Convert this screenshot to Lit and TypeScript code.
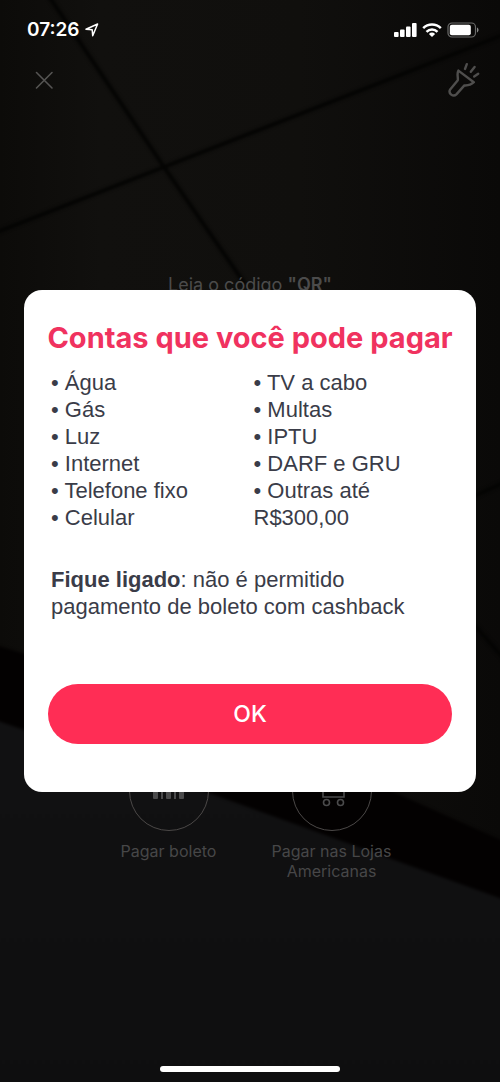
import { LitElement, html, css, svg } from "lit";
import { customElement, property } from "lit/decorators.js";

@customElement("status-bar")
class StatusBar extends LitElement {
  static styles = css`
    :host {
      display: flex;
      justify-content: space-between;
      align-items: center;
      height: 60px;
      padding: 0 21px 0 27px;
      color: #fff;
    }
    .side {
      display: flex;
      align-items: center;
      gap: 5px;
    }
    .time {
      font-size: 19px;
      font-weight: 600;
      line-height: 24px;
    }
    svg {
      display: block;
    }
  `;

  render() {
    return html`
      <div class="side">
        <span class="time">07:26</span>
        <svg width="14" height="14" viewBox="0 0 14 14" aria-hidden="true">
          <path d="M1 6.2 12.6 1 7.7 12.8 7.2 6.8Z" fill="none" stroke="#fff" stroke-width="1.5" stroke-linejoin="round" />
        </svg>
      </div>
      <div class="side">
        <svg width="23" height="16" viewBox="0 0 23 16" fill="#fff" aria-hidden="true">
          <rect x="0" y="10" width="4.6" height="5" rx="1" />
          <rect x="6" y="7.4" width="4.6" height="7.6" rx="1" />
          <rect x="12" y="4.4" width="4.6" height="10.6" rx="1" />
          <rect x="18" y="1" width="4.6" height="14" rx="1" />
        </svg>
        <svg width="20" height="16" viewBox="0 0 20 16" fill="none" stroke="#fff" stroke-width="2.5" aria-hidden="true">
          <path d="M1.2 6.2a12.6 12.6 0 0 1 17.6 0" />
          <path d="M4.5 9.8a7.9 7.9 0 0 1 11 0" />
          <path d="M10 15 6.9 12a4.5 4.5 0 0 1 6.2 0Z" fill="#fff" stroke="none" />
        </svg>
        <svg width="32" height="16" viewBox="0 0 32 16" aria-hidden="true">
          <rect x="1" y="1" width="27.5" height="14" rx="4" fill="none" stroke="#6b6b6a" stroke-width="1.2" />
          <rect x="2.8" y="2.8" width="21" height="10.4" rx="2" fill="#fff" />
          <path d="M30 5.6c2 .8 2 4 0 4.8Z" fill="#8a8a89" />
        </svg>
      </div>
    `;
  }
}

@customElement("pay-action")
class PayAction extends LitElement {
  @property() label = "";
  @property() icon = "";

  static styles = css`
    :host {
      display: block;
    }
    .action {
      display: flex;
      flex-direction: column;
      align-items: center;
      gap: 10px;
      width: 100%;
      padding: 0 16px;
      border: 0;
      background: none;
      color: #474748;
      font: inherit;
      font-size: 16px;
      line-height: 20px;
    }
    .ring {
      display: grid;
      place-items: center;
      box-sizing: border-box;
      width: 80px;
      height: 80px;
      border: 1px solid #4b4847;
      border-radius: 50%;
    }
  `;

  private glyph() {
    return this.icon === "barcode"
      ? svg`<g fill="#4b4b4c">
          <rect x="4" y="4" width="5" height="24" rx="1"/>
          <rect x="12" y="4" width="2" height="24"/>
          <rect x="17" y="4" width="5" height="24" rx="1"/>
          <rect x="25" y="4" width="2" height="24"/>
          <rect x="30" y="4" width="5" height="24" rx="1"/>
        </g>`
      : svg`<g fill="none" stroke="#4b4b4c" stroke-width="1.6">
          <path d="M4 4h5l3 14M10 8h24l-3 11H11v7h21v-5"/>
          <circle cx="14.5" cy="31.5" r="3"/>
          <circle cx="28.5" cy="31.5" r="3"/>
        </g>`;
  }

  render() {
    return html`
      <button class="action" type="button">
        <span class="ring">
          <svg width="40" height="40" viewBox="0 0 40 40" aria-hidden="true">${this.glyph()}</svg>
        </span>
        <span>${this.label}</span>
      </button>
    `;
  }
}

@customElement("app-root")
class AppRoot extends LitElement {
  static styles = css`
    :host {
      display: block;
      font-family: Inter, "Liberation Sans", sans-serif;
    }
    .screen {
      position: relative;
      display: flex;
      flex-direction: column;
      min-height: 100vh;
      overflow: hidden;
      background: #0f0e0d;
    }
    .photo,
    .overlay {
      position: absolute;
      inset: 0;
      width: 100%;
      height: 100%;
    }
    .front {
      position: relative;
      display: flex;
      flex: 1;
      flex-direction: column;
    }
    .tools {
      display: flex;
      justify-content: space-between;
      align-items: center;
      height: 40px;
      padding: 0 18px 0 32px;
    }
    .tool {
      display: block;
      padding: 0;
      border: 0;
      background: none;
    }
    .tool svg {
      display: block;
    }
    .prompt {
      flex: 1;
      margin: 0;
      padding-top: 173px;
      color: #4b4b4b;
      font-size: 18px;
      line-height: 24px;
      text-align: center;
    }
    .prompt strong {
      font-weight: 600;
    }
    .actions {
      display: grid;
      grid-template-columns: repeat(2, 163px);
      justify-content: center;
      padding-bottom: 185px;
    }
    .home {
      align-self: center;
      width: 36%;
      height: 6px;
      margin-bottom: 10px;
      border-radius: 3px;
      background: #fff;
    }
    .overlay {
      display: flex;
      align-items: center;
      box-sizing: border-box;
      padding: 0 24px;
    }
    .card {
      flex: 1;
      min-width: 0;
      padding: 30px 24px 48px;
      border-radius: 18px;
      background: #fff;
      color: #3a3c48;
      font-family: "Liberation Sans", Arial, sans-serif;
      font-size: 22px;
      line-height: 27px;
    }
    .title {
      display: flex;
      justify-content: center;
      margin: 0 0 13px;
      color: #f0325f;
      font-family: Inter, sans-serif;
      font-size: 29px;
      font-weight: 700;
      line-height: 36px;
      white-space: nowrap;
    }
    .columns {
      display: grid;
      grid-template-columns: 1fr 1fr;
      gap: 4px;
      padding-left: 3px;
    }
    .list {
      margin: 0;
      padding: 0;
      list-style: none;
    }
    .item::before {
      content: "• ";
    }
    .note {
      margin: 0;
      padding: 35px 3px 64px;
    }
    .ok {
      display: block;
      width: 100%;
      height: 60px;
      border: 0;
      border-radius: 30px;
      background: #ff2d55;
      color: #fff;
      font-family: Inter, sans-serif;
      font-size: 23px;
      font-weight: 500;
    }
  `;

  private left = ["Água", "Gás", "Luz", "Internet", "Telefone fixo", "Celular"];
  private right = ["TV a cabo", "Multas", "IPTU", "DARF e GRU", "Outras até R$300,00"];

  private list(items: string[]) {
    return html`<ul class="list">${items.map((i) => html`<li class="item">${i}</li>`)}</ul>`;
  }

  render() {
    return html`
      <div class="screen">
        <svg class="photo" viewBox="0 0 500 1082" preserveAspectRatio="none" aria-hidden="true">
          <defs>
            <linearGradient id="tile" x1="0" y1="0" x2="1" y2="0">
              <stop offset="0" stop-color="#0c0b09" />
              <stop offset=".2" stop-color="#11100e" />
              <stop offset=".6" stop-color="#100f0d" />
              <stop offset="1" stop-color="#0a0908" />
            </linearGradient>
            <linearGradient id="desk" x1="0" y1="0" x2="0" y2="1">
              <stop offset="0" stop-color="#111112" />
              <stop offset="1" stop-color="#0e0e0f" />
            </linearGradient>
            <filter id="soft" color-interpolation-filters="sRGB"><feGaussianBlur stdDeviation="1.5" /></filter>
          </defs>
          <rect width="500" height="1082" fill="url(#tile)" />
          <g filter="url(#soft)">
            <path d="M48-5 164 167 245 284M-5 233 164 167 505 34M470 498 505 482M470 620 505 660" fill="none" stroke="#040403" stroke-width="4" />
            <path d="M-5 645 210 710 505 842V905L220 800-5 725Z" fill="#030101" />
            <path d="M-5 720 220 797 505 900V1090H-5Z" fill="url(#desk)" />
          </g>
        </svg>

        <div class="front">
          <status-bar></status-bar>
          <div class="tools">
            <button class="tool" type="button" aria-label="Fechar">
              <svg width="24" height="24" viewBox="0 0 24 24" fill="none" stroke="#555453" stroke-width="1.6" stroke-linecap="round">
                <path d="M4.5 4.5 20 20M20 4.5 4.5 20" />
              </svg>
            </button>
            <button class="tool" type="button" aria-label="Lanterna">
              <svg width="36" height="36" viewBox="0 0 36 36" fill="none" stroke="#4f4e4d" stroke-width="2.4" stroke-linecap="round" stroke-linejoin="round">
                <path d="M12.4 8.6 27.8 20.2C25.4 22.6 22 23.6 18.4 23.4L10.4 32.4C7.2 35.4 1.8 31.6 4.2 27.4L11.8 18.2C12.2 14.4 10.6 11.8 12.4 8.6Z" />
                <path d="M19 7 20.8 2.2M24.8 9.8 28.6 5M28.2 14.6 32.2 11.8" />
              </svg>
            </button>
          </div>
          <p class="prompt">Leia o código <strong>"QR"</strong></p>
          <div class="actions">
            <pay-action icon="barcode" label="Pagar boleto"></pay-action>
            <pay-action icon="cart" label="Pagar nas Lojas Americanas"></pay-action>
          </div>
          <div class="home"></div>
        </div>

        <div class="overlay">
          <section class="card" role="dialog" aria-modal="true" aria-labelledby="title">
            <h1 class="title" id="title">Contas que você pode pagar</h1>
            <div class="columns">${this.list(this.left)}${this.list(this.right)}</div>
            <p class="note"><strong>Fique ligado</strong>: não é permitido pagamento de boleto com cashback</p>
            <button class="ok" type="button">OK</button>
          </section>
        </div>
      </div>
    `;
  }
}
